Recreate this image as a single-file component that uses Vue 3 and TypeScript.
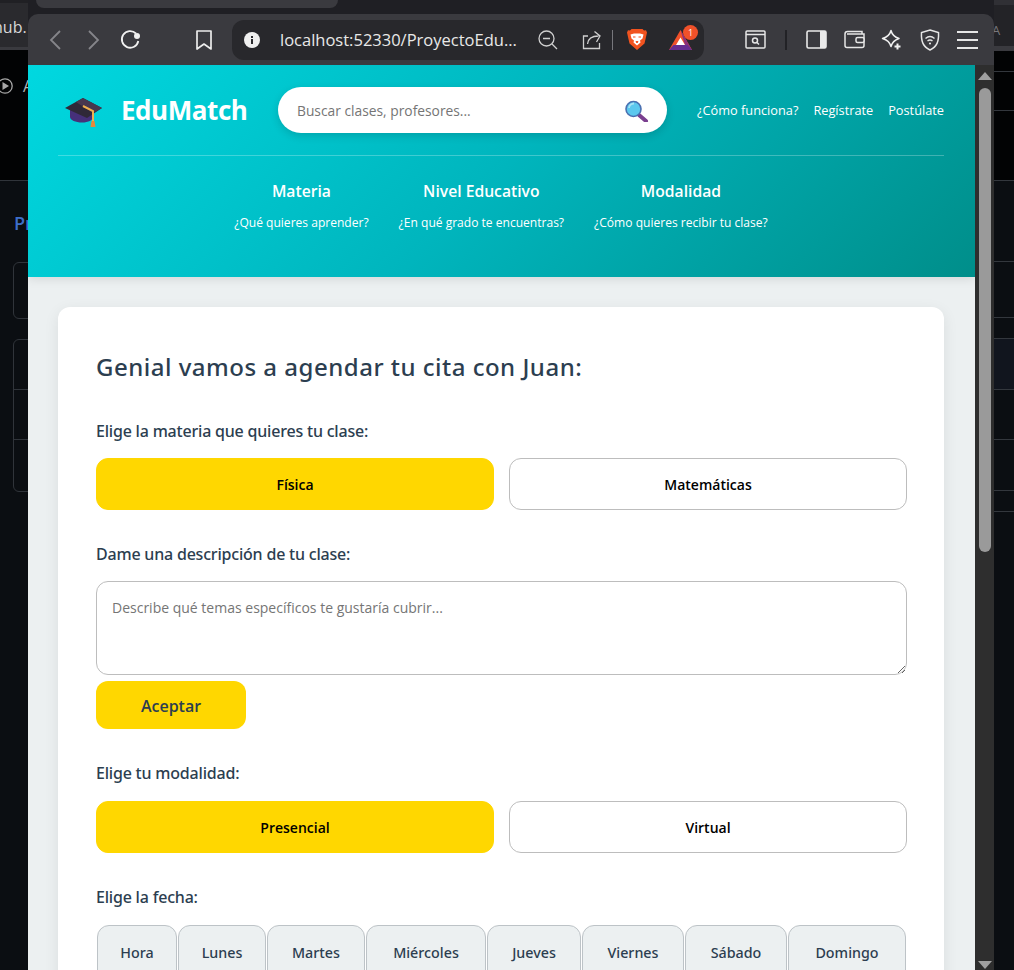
<script setup lang="ts">
import { ref } from "vue"

interface NavColumn {
  title: string
  hint: string
}

const navColumns: NavColumn[] = [
  { title: "Materia", hint: "¿Qué quieres aprender?" },
  { title: "Nivel Educativo", hint: "¿En qué grado te encuentras?" },
  { title: "Modalidad", hint: "¿Cómo quieres recibir tu clase?" },
]

const topLinks = ["¿Cómo funciona?", "Regístrate", "Postúlate"]
const subjects = ["Física", "Matemáticas"]
const modes = ["Presencial", "Virtual"]
const days = [
  { name: "Hora", width: 80 },
  { name: "Lunes", width: 88 },
  { name: "Martes", width: 98 },
  { name: "Miércoles", width: 120 },
  { name: "Jueves", width: 94 },
  { name: "Viernes", width: 102 },
  { name: "Sábado", width: 102 },
  { name: "Domingo", width: 118 },
]

const subject = ref("Física")
const mode = ref("Presencial")
const description = ref("")
</script>

<template>
  <div class="desktop">
    <!-- window behind, left part -->
    <div class="behind-left">
      <div class="behind-tab"><span>hub.</span></div>
      <div class="behind-bar">
        <svg width="14" height="18" viewBox="0 0 14 18" class="play">
          <circle cx="5" cy="9" r="7.200" fill="none" stroke="#a8a8a8" stroke-width="1.300" />
          <path d="M2.500 5 9 9l-6.500 4z" fill="#a8a8a8" />
        </svg>
        <span>A</span>
      </div>
      <div class="behind-title">Pr</div>
      <div class="behind-box small"></div>
      <div class="behind-box list">
        <div></div>
        <div></div>
        <div></div>
      </div>
    </div>

    <div class="middle">
      <div class="other-tab"></div>
      <div class="browser">
        <div class="toolbar">
          <svg class="tb back" width="16" height="22" viewBox="0 0 16 22"><path d="M12 2 3 11l9 9" fill="none" stroke="#85858a" stroke-width="1.800" /></svg>
          <svg class="tb forward" width="16" height="22" viewBox="0 0 16 22"><path d="m4 2 9 9-9 9" fill="none" stroke="#85858a" stroke-width="1.800" /></svg>
          <svg class="tb reload" width="22" height="22" viewBox="0 0 22 22">
            <path d="M17 4.500A8.300 8.300 0 1 0 19.300 12" fill="none" stroke="#f0f0f0" stroke-width="1.800" />
            <circle cx="18" cy="7" r="3" fill="#f0f0f0" />
          </svg>
          <svg class="tb bookmark" width="18" height="22" viewBox="0 0 18 22"><path d="M2 2h14v18l-7-5-7 5z" fill="none" stroke="#ececec" stroke-width="1.700" stroke-linejoin="round" /></svg>
          <div class="urlbar">
            <svg width="16" height="16" viewBox="0 0 16 16">
              <circle cx="8" cy="8" r="8" fill="#efefef" />
              <rect x="7" y="7" width="2" height="5" fill="#2a2a2e" />
              <rect x="7" y="4" width="2" height="2" fill="#2a2a2e" />
            </svg>
            <span class="url">localhost:52330/ProyectoEdu...</span>
            <svg class="zoom-out" width="20" height="20" viewBox="0 0 20 20">
              <circle cx="8.500" cy="8.500" r="7.500" fill="none" stroke="#cfcfcf" stroke-width="1.300" />
              <path d="M5 8.500h7M14 14l5 5" stroke="#cfcfcf" stroke-width="1.300" />
            </svg>
            <svg class="share" width="20" height="20" viewBox="0 0 20 20">
              <path d="M6 6H1.500v12.500h16V13" fill="none" stroke="#cfcfcf" stroke-width="1.300" />
              <path d="M5.500 14c.5-5 4-8 11-8M12.500 1.500l5.500 4.500-3.500 6" fill="none" stroke="#cfcfcf" stroke-width="1.300" />
            </svg>
            <i class="url-sep"></i>
            <svg class="lion" width="20" height="21" viewBox="0 0 20 21">
              <path d="M4.500 0h11l1.500 1.500 2-.3L20 3.500 19 8l-1.500 6.500L10 21l-7.500-6.500L1 8 0 3.500l1-2.300 2 .3z" fill="#f1531f" />
              <path d="M3.500 5.500 7 4.500h6l3.500 1-1 4-2.500 2 .5 2-3.500 3-3.500-3 .5-2-2.500-2z" fill="#fff" />
              <path d="M6 8h2.500M11.500 8H14M9 12.500h2l-1 1.500z" stroke="#f1531f" stroke-width="1" fill="#f1531f" />
            </svg>
            <span class="bat">
              <svg width="23" height="20" viewBox="0 0 23 20">
                <path d="M11.500 0 0 20h23z" fill="#f0512a" />
                <path d="M11.500 0 23 20l-7-5z" fill="#8c2f7c" />
                <path d="M0 20 4.500 15h14l4.500 5z" fill="#662d91" />
                <path d="M11.500 7.500 7 15h9z" fill="#fff" />
              </svg>
              <em>1</em>
            </span>
          </div>
          <svg class="tb reader" width="21" height="19" viewBox="0 0 21 19">
            <rect x="1" y="1" width="19" height="17" rx="1" fill="none" stroke="#e6e6e6" stroke-width="1.500" />
            <path d="M1 4.500h19" stroke="#e6e6e6" stroke-width="1.500" />
            <circle cx="10" cy="10.500" r="2.500" fill="none" stroke="#e6e6e6" stroke-width="1.500" />
            <path d="m12 12.500 2 2" stroke="#e6e6e6" stroke-width="1.500" />
          </svg>
          <i class="tb-sep"></i>
          <svg class="tb panel" width="21" height="19" viewBox="0 0 21 19">
            <rect x="1" y="1" width="19" height="17" rx="1.500" fill="none" stroke="#eaeaea" stroke-width="1.600" />
            <rect x="14" y="1" width="6" height="17" fill="#eaeaea" />
          </svg>
          <svg class="tb wallet" width="21" height="19" viewBox="0 0 21 19">
            <path d="M18 4V1.500H3.500C2 1.500 1 2.500 1 4V15.500c0 1.200 1 2 2 2h15c1.200 0 2-.8 2-2V4H3" fill="none" stroke="#e6e6e6" stroke-width="1.500" />
            <rect x="12" y="7.500" width="8" height="5" rx="1.500" fill="#3a3a3f" stroke="#e6e6e6" stroke-width="1.500" />
          </svg>
          <svg class="tb leo" width="22" height="22" viewBox="0 0 22 22">
            <path d="M10 1.500c1 4 3.500 6.500 8 8-4.500 1.500-7 4-8 8-1-4-3.500-6.500-8.500-8 5-1.500 7.500-4 8.500-8z" fill="none" stroke="#f0f0f0" stroke-width="1.500" stroke-linejoin="round" />
            <path d="M16.500 14.500v6M13.500 17.500h6" stroke="#f0f0f0" stroke-width="2" />
          </svg>
          <svg class="tb vpn" width="20" height="22" viewBox="0 0 20 22">
            <path d="M10 1 18.500 3.500c.5 9-1.500 14-8.500 17.500C3 17.500 1 12.500 1.500 3.500z" fill="none" stroke="#e6e6e6" stroke-width="1.500" />
            <path d="M5.500 9.500c2.800-2.500 6.200-2.500 9 0M7.500 12c1.600-1.300 3.400-1.300 5 0" fill="none" stroke="#e6e6e6" stroke-width="1.400" />
            <circle cx="10" cy="14.500" r="1.100" fill="#e6e6e6" />
          </svg>
          <div class="hamburger"><i></i><i></i><i></i></div>
        </div>

        <div class="viewport">
          <div class="page">
            <header class="site-header">
              <div class="header-top">
                <div class="brand">
                  <svg width="40" height="34" viewBox="0 0 40 34">
                    <path d="M6 15v9c0 3 5.500 5.500 12 5.500S29 27 29 24v-9z" fill="#46307a" />
                    <path d="M19 5 38 15l-15 10L1 15z" fill="#2f2838" />
                    <path d="M19 5 38 15l-9 5-17-11z" fill="#48384f" />
                    <path d="M19 13 29 18v12" fill="none" stroke="#f0b04e" stroke-width="2" />
                    <path d="M27.500 28h3l1 6h-5z" fill="#e8893a" />
                  </svg>
                  <span class="brand-name">EduMatch</span>
                </div>
                <div class="search">
                  <span class="search-text">Buscar clases, profesores...</span>
                  <svg width="24" height="24" viewBox="0 0 24 24">
                    <path d="M14 17l7 6" stroke="#7a3f8f" stroke-width="4" stroke-linecap="round" />
                    <circle cx="8.500" cy="11" r="7.500" fill="#5cc8ee" stroke="#4a6fb0" stroke-width="1.600" />
                    <path d="M4 10a5 5 0 0 1 5-4.500" fill="none" stroke="#a6e2f5" stroke-width="1.800" />
                  </svg>
                </div>
                <nav class="top-links">
                  <a v-for="link in topLinks" :key="link">{{ link }}</a>
                </nav>
              </div>
              <div class="header-nav">
                <div v-for="col in navColumns" :key="col.title" class="nav-col">
                  <div class="nav-title">{{ col.title }}</div>
                  <div class="nav-hint">{{ col.hint }}</div>
                </div>
              </div>
            </header>

            <main class="content">
              <section class="card">
                <h2>Genial vamos a agendar tu cita con Juan:</h2>

                <p class="label first">Elige la materia que quieres tu clase:</p>
                <div class="options">
                  <button
                    v-for="item in subjects"
                    :key="item"
                    class="option"
                    :class="{ active: subject === item }"
                    @click="subject = item"
                  >{{ item }}</button>
                </div>

                <p class="label tight">Dame una descripción de tu clase:</p>
                <textarea
                  v-model="description"
                  class="description"
                  placeholder="Describe qué temas específicos te gustaría cubrir..."
                ></textarea>
                <button class="accept">Aceptar</button>

                <p class="label">Elige tu modalidad:</p>
                <div class="options">
                  <button
                    v-for="item in modes"
                    :key="item"
                    class="option"
                    :class="{ active: mode === item }"
                    @click="mode = item"
                  >{{ item }}</button>
                </div>

                <p class="label">Elige la fecha:</p>
                <div class="days">
                  <div
                    v-for="day in days"
                    :key="day.name"
                    class="day"
                    :style="{ width: day.width + 'px' }"
                  >{{ day.name }}</div>
                </div>
              </section>
            </main>
          </div>

          <div class="scrollbar">
            <i class="arrow-up"></i>
            <div class="thumb"></div>
            <i class="arrow-down"></i>
          </div>
        </div>
      </div>
    </div>

    <!-- window behind, right part -->
    <div class="behind-right">
      <div class="right-tab"><span>A</span></div>
      <div class="right-black">
        <div class="r-row r21"></div>
        <div class="r-row r39"></div>
        <div class="r-row r70"></div>
      </div>
      <div class="r-row r81"></div>
      <div class="r-row r56"></div>
      <div class="r-row r21"></div>
      <div class="r-row r51 tinted"></div>
      <div class="r-row r50"></div>
      <div class="r-row r51"></div>
      <div class="r-row r21"></div>
    </div>
  </div>
</template>

<style scoped>
.desktop {
  display: flex;
  width: 1014px;
  height: 970px;
  overflow: hidden;
  background: #0b0e12;
  font-family: "Open Sans", "Noto Sans", sans-serif;
}

/* things peeking out behind the browser */
.behind-left {
  width: 28px;
  flex: none;
  overflow: hidden;
  background: #0b0e12;
}

.behind-tab {
  height: 50px;
  padding-top: 15px;
  box-sizing: border-box;
  background: #2a2a2e;
  border-top: 3px solid #202024;
  border-bottom: 3px solid #3a3a3f;
  color: #d8d8d8;
  font-size: 16px;
  line-height: 19px;
  white-space: nowrap;
  text-indent: -7px;
}

.behind-bar {
  display: flex;
  align-items: center;
  gap: 9px;
  height: 131px;
  box-sizing: border-box;
  padding-bottom: 58px;
  background: #020304;
  border-bottom: 1px solid #30343a;
  color: #b5b5b5;
  font-size: 16px;
}

.play {
  flex: none;
}

.behind-title {
  margin: 30px 0 0 14px;
  height: 25px;
  color: #3d6fc8;
  font-size: 18px;
  font-weight: 600;
  line-height: 25px;
  white-space: nowrap;
}

.behind-box {
  margin-left: 13px;
  width: 40px;
  box-sizing: border-box;
  border: 1px solid #30343a;
  border-radius: 6px;
}

.behind-box.small {
  margin-top: 26px;
  height: 57px;
}

.behind-box.list {
  margin-top: 20px;
  height: 153px;
}

.behind-box.list div {
  height: 50px;
  border-bottom: 1px solid #30343a;
  box-sizing: border-box;
}

.behind-box.list div:last-child {
  border-bottom: none;
}

.behind-right {
  width: 20px;
  flex: none;
  overflow: hidden;
}

.right-tab {
  height: 51px;
  box-sizing: border-box;
  background: #232327;
  border-top: 5px solid #303035;
  border-bottom: 5px solid #3a3a3f;
  color: #77777c;
  font-size: 13px;
  line-height: 50px;
  text-indent: -2px;
}

.right-black {
  background: #020304;
}

.r-row {
  box-sizing: border-box;
  border-bottom: 1px solid #33373d;
}

.r21 {
  height: 21px;
}

.r39 {
  height: 39px;
}

.r70 {
  height: 70px;
}

.r81 {
  height: 81px;
}

.r56 {
  height: 56px;
}

.r51 {
  height: 51px;
}

.r50 {
  height: 50px;
}

.tinted {
  background: #11151e;
}

.middle {
  width: 966px;
  flex: none;
  background: #1f1f24;
}

.other-tab {
  width: 302px;
  height: 8px;
  margin: 0 0 6px 8px;
  background: #3a3a3f;
  border-radius: 0 0 8px 8px;
}

.browser {
  height: 956px;
  display: flex;
  flex-direction: column;
  border-radius: 10px 10px 0 0;
  overflow: hidden;
  background: #3a3a3f;
}

/* browser chrome */
.toolbar {
  display: flex;
  align-items: center;
  flex: none;
  height: 51px;
}

.tb {
  flex: none;
}

.back {
  margin-left: 20px;
}

.forward {
  margin-left: 21px;
}

.reload {
  margin-left: 18px;
}

.bookmark {
  margin-left: 54px;
}

.urlbar {
  display: flex;
  align-items: center;
  flex: none;
  width: 472px;
  height: 40px;
  margin-left: 19px;
  padding-left: 12px;
  box-sizing: border-box;
  background: #28282c;
  border-radius: 12px;
}

.url {
  margin-left: 20px;
  width: 250px;
  color: #e8e8e8;
  font-size: 16.500px;
  white-space: nowrap;
}

.zoom-out {
  margin-left: 8px;
}

.share {
  margin-left: 24px;
}

.url-sep {
  width: 1px;
  height: 20px;
  margin-left: 10px;
  background: #77777c;
}

.lion {
  margin-left: 14px;
}

.bat {
  position: relative;
  margin-left: 22px;
  height: 20px;
}

.bat em {
  position: absolute;
  top: -5px;
  right: -6px;
  width: 15px;
  height: 15px;
  border-radius: 50%;
  background: #f0512a;
  color: #fff;
  font-size: 9px;
  font-style: normal;
  line-height: 15px;
  text-align: center;
}

.reader {
  margin-left: 41px;
}

.tb-sep {
  width: 2px;
  height: 20px;
  margin-left: 19px;
  background: #222226;
}

.panel {
  margin-left: 19px;
}

.wallet {
  margin-left: 17px;
}

.leo {
  margin-left: 16px;
}

.vpn {
  margin-left: 17px;
}

.hamburger {
  display: flex;
  flex-direction: column;
  gap: 6px;
  width: 21px;
  margin-left: 17px;
}

.hamburger i {
  height: 2px;
  background: #e6e6e6;
}

/* page */
.viewport {
  flex: 1;
  display: flex;
  min-height: 0;
}

.page {
  width: 947px;
  flex: none;
  overflow: hidden;
  background: #ecf0f1;
}

.site-header {
  height: 212px;
  padding: 0 31px 0 30px;
  box-sizing: border-box;
  background: linear-gradient(135deg, #00d8e0 0%, #00b5bd 50%, #008e8a 100%);
  box-shadow: 0 2px 10px rgba(0, 0, 0, 0.1);
  color: #fff;
}

.header-top {
  display: flex;
  align-items: center;
  height: 90px;
  border-bottom: 1px solid rgba(255, 255, 255, 0.25);
}

.brand {
  display: flex;
  align-items: center;
  gap: 17px;
  width: 220px;
  flex: none;
  padding-left: 6px;
  box-sizing: border-box;
}

.brand-name {
  font-size: 26px;
  font-weight: 700;
  letter-spacing: -0.450px;
}

.search {
  display: flex;
  align-items: center;
  justify-content: space-between;
  width: 389px;
  height: 46px;
  flex: none;
  padding: 0 18px 0 19px;
  box-sizing: border-box;
  background: #fff;
  border-radius: 23px;
  box-shadow: 0 3px 8px rgba(0, 0, 0, 0.15);
}

.search-text {
  color: #757575;
  font-size: 13.800px;
}

.top-links {
  display: flex;
  gap: 15px;
  margin-left: auto;
  font-size: 12.750px;
  white-space: nowrap;
}

.header-nav {
  display: flex;
  justify-content: center;
  gap: 30px;
  padding-top: 23px;
}

.nav-col {
  text-align: center;
}

.nav-title {
  font-size: 15.700px;
  font-weight: 600;
  line-height: 24px;
}

.nav-hint {
  margin-top: 11px;
  font-size: 12.050px;
  line-height: 18px;
}

.content {
  padding: 30px 31px 0 30px;
}

.card {
  padding: 38px 37px 38px 38px;
  background: #fff;
  border-radius: 12px;
  box-shadow: 0 4px 15px rgba(0, 0, 0, 0.08);
}

h2 {
  margin: 0;
  color: #2c3e50;
  font-family: "Noto Sans", sans-serif;
  font-size: 24px;
  font-weight: 500;
  letter-spacing: 0.500px;
  line-height: 44px;
}

.label {
  margin: 32px 0 16px;
  color: #2c3e50;
  font-family: "Noto Sans", sans-serif;
  font-size: 16px;
  font-weight: 500;
  letter-spacing: -0.200px;
  line-height: 24px;
}

.label.first {
  margin: 30px 0 15px;
}

.label.tight {
  margin-bottom: 15px;
}

.options {
  display: flex;
  gap: 15px;
}

.option {
  flex: 1;
  height: 52px;
  padding: 0;
  background: #fff;
  border: 1px solid #bdbdbd;
  border-radius: 12px;
  color: #000;
  font-family: inherit;
  font-size: 14px;
  font-weight: 600;
}

.option.active {
  background: #ffd700;
  border-color: #ffd700;
}

.description {
  display: block;
  width: 100%;
  height: 94px;
  padding: 16px 15px 14px;
  box-sizing: border-box;
  background: #fff;
  border: 1px solid #bdbdbd;
  border-radius: 12px;
  font-family: inherit;
  font-size: 14px;
  line-height: 20px;
  outline: none;
}

.description::placeholder {
  color: #757575;
}

.accept {
  display: block;
  width: 150px;
  height: 48px;
  margin-top: 6px;
  padding: 1px 0 0;
  background: #ffd700;
  border: none;
  border-radius: 12px;
  color: #2c3e50;
  font-family: inherit;
  font-size: 16px;
  font-weight: 600;
}

.days {
  display: flex;
  gap: 1px;
  padding-left: 1px;
}

.day {
  flex: none;
  height: 60px;
  box-sizing: border-box;
  padding-top: 17px;
  background: #ecf0f1;
  border: 1px solid #bdc3c7;
  border-radius: 12px 12px 0 0;
  color: #2c3e50;
  font-family: "Noto Sans", sans-serif;
  font-size: 14.300px;
  font-weight: 500;
  line-height: 20px;
  text-align: center;
}

/* scrollbar */
.scrollbar {
  display: flex;
  flex-direction: column;
  align-items: center;
  width: 19px;
  flex: none;
  background: #2e2e2e;
}

.arrow-up,
.arrow-down {
  width: 0;
  height: 0;
  border-left: 7px solid transparent;
  border-right: 7px solid transparent;
}

.arrow-up {
  margin-top: 7px;
  border-bottom: 8px solid #a0a0a0;
}

.arrow-down {
  margin-top: 409px;
  border-top: 8px solid #a0a0a0;
}

.thumb {
  width: 12px;
  height: 464px;
  margin-top: 8px;
  background: #9a9a9a;
  border-radius: 6px;
}
</style>

<style>
html,
body {
  margin: 0;
  overflow: hidden;
  background: #0b0e12;
}
</style>
